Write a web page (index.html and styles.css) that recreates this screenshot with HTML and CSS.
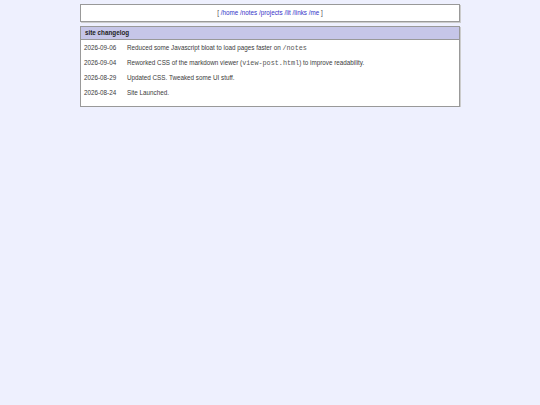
FILE: index.html
```html
<!DOCTYPE html>
<html>
<head>
<meta charset="utf-8">
<link rel="stylesheet" href="styles.css">
</head>
<body>
<div class="page">
  <nav class="nav">[ <a href="#">/home</a> <a href="#">/notes</a> <a href="#">/projects</a> <a href="#">/lit</a> <a href="#">/links</a> <a href="#">/me</a> ]</nav>
  <section class="box">
    <div class="box-head">site changelog</div>
    <div class="box-body">
      <div class="row"><span class="date">2026-09-06</span><span class="desc">Reduced some Javascript bloat to load pages faster on <code>/notes</code></span></div>
      <div class="row"><span class="date">2026-09-04</span><span class="desc">Reworked CSS of the markdown viewer (<code>view-post.html</code>) to improve readability.</span></div>
      <div class="row"><span class="date">2026-08-29</span><span class="desc">Updated CSS. Tweaked some UI stuff.</span></div>
      <div class="row"><span class="date">2026-08-24</span><span class="desc">Site Launched.</span></div>
    </div>
  </section>
</div>
</body>
</html>
```
FILE: styles.css
```css
html, body {
  margin: 0;
  padding: 0;
  background: #eef0fe;
  font-family: "Liberation Sans", Arial, sans-serif;
  font-size: 6.3px;
  color: #3a3a3a;
}
.page {
  width: 380px;
  margin: 4px auto 0;
  display: flex;
  flex-direction: column;
  gap: 4px;
}
.nav {
  background: #fff;
  border: 1px solid #999;
  box-shadow: 1px 1px 0 #ccc;
  height: 16px;
  line-height: 16px;
  text-align: center;
  color: #444;
}
.nav a {
  color: #3434c8;
  text-decoration: none;
}
.box {
  background: #fff;
  border: 1px solid #999;
  box-shadow: 1px 1px 0 #ccc;
}
.box-head {
  background: #c6c6e8;
  border-bottom: 1px solid #999;
  font-weight: bold;
  color: #222;
  padding: 0 4px;
  height: 12px;
  line-height: 12px;
}
.box-body {
  padding: 1px 3px 5px;
}
.row {
  display: flex;
  height: 15px;
  line-height: 14px;
}
.date {
  width: 43px;
  flex: none;
}
code {
  font-family: "Liberation Mono", monospace;
  font-size: 6.8px;
  color: #555;
}
```
